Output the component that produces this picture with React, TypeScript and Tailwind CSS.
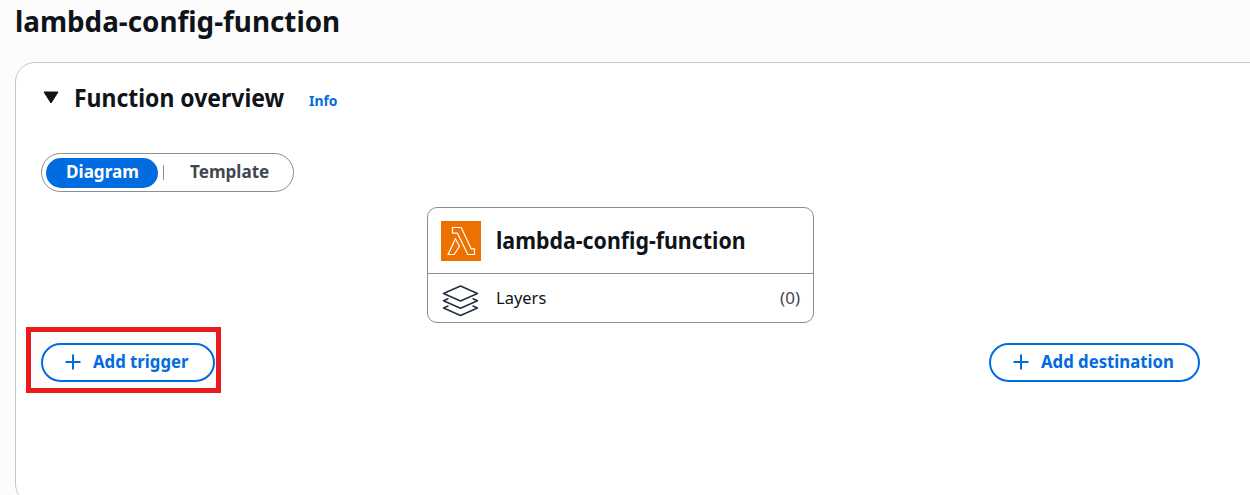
import React from "react";

function PlusIcon() {
  return (
    <svg width="16" height="16" viewBox="0 0 16 16" fill="none" stroke="currentColor" strokeWidth="2" className="-mt-[1px] shrink-0">
      <path d="M8 0.5V15.5M0.5 8H15.5" />
    </svg>
  );
}

function LambdaIcon() {
  return (
    <svg width="40" height="40" viewBox="0 0 40 40" className="shrink-0">
      <rect width="40" height="40" fill="#ed7100" />
      <g fill="none" stroke="#fff" strokeWidth="1.2" strokeLinejoin="miter">
        <path d="M11.5 6.5H20.2L30.2 27.8H33.5V33.5H26.8L16.4 12.2H11.5Z" />
        <path d="M14.4 17.8L18.5 25.2L13.2 33.5H7.1Z" />
      </g>
    </svg>
  );
}

function LayersIcon() {
  return (
    <svg width="38" height="34" viewBox="0 0 38 34" fill="none" stroke="#232f3e" strokeWidth="1.5" strokeLinejoin="round" strokeLinecap="round" className="mt-[6px] shrink-0">
      <path d="M18.5 2L35.5 9.5L18.5 17L1.5 9.5Z" />
      <path d="M6 14.8L1.5 16.8L18.5 24.3L35.5 16.8L31 14.8" />
      <path d="M6 22L1.5 24L18.5 31.5L35.5 24L31 22" />
    </svg>
  );
}

function ActionButton({ label, className }: { label: string; className: string }) {
  return (
    <button className={`flex h-[39px] shrink-0 items-center gap-[12px] rounded-full border-2 border-[#006ce0] bg-white pl-[22px] text-[18px] leading-none font-bold whitespace-nowrap text-[#006ce0] ${className}`}>
      <PlusIcon />
      <span className="-mt-[3px] origin-left scale-x-[0.93]">{label}</span>
    </button>
  );
}

export default function App() {
  return (
    <div className="h-[495px] w-full overflow-hidden bg-[#fcfcfd] pl-[15px] font-['Noto_Sans',sans-serif] text-[#0f141a]">
      <header className="flex h-[62px]">
        <h1 className="origin-left scale-x-[0.993] text-[28px] leading-[42px] font-bold whitespace-nowrap">lambda-config-function</h1>
      </header>
      <main className="h-[442px] w-[1260px] rounded-[20px] border border-[#c6c6cd] bg-white pl-[25px]">
        <div className="flex h-[90px] items-start pt-[17px]">
          <svg width="16" height="14" viewBox="0 0 16 14" className="mt-[11px] ml-[2px] shrink-0">
            <path d="M1 1H15L8 12Z" fill="#0f141a" stroke="#0f141a" strokeLinejoin="round" />
          </svg>
          <h2 className="ml-[15px] w-[235px] shrink-0 text-[25px] leading-[34px] font-bold whitespace-nowrap">
            <span className="inline-block origin-left scale-x-[0.918]">Function overview</span>
          </h2>
          <a className="mt-[10px] text-[14px] leading-[22px] font-bold text-[#006ce0]">
            <span className="inline-block origin-left scale-x-[0.99]">Info</span>
          </a>
        </div>
        <div className="flex h-[39px] w-[253px] items-center rounded-full border border-[#8c8c94] pl-[4px] text-[18px] leading-none font-bold whitespace-nowrap">
          <button className="h-[30px] w-[112px] shrink-0 rounded-full bg-[#006ce0] pb-[3px] pl-[20px] text-left text-white">
            <span className="inline-block origin-left scale-x-[0.95]">Diagram</span>
          </button>
          <div className="ml-[5px] h-[15px] w-px bg-[#8c8c94]" />
          <button className="ml-[26px] pb-[3px] text-[#424650]">
            <span className="inline-block origin-left scale-x-[0.95]">Template</span>
          </button>
        </div>
        <section className="mt-[15px] ml-[386px] h-[116px] w-[387px] rounded-[10px] border border-[#8c8c94]">
          <div className="flex h-[66px] items-center border-b border-[#8c8c94] pl-[13px]">
            <LambdaIcon />
            <h3 className="ml-[15px] text-[23px] leading-none font-bold whitespace-nowrap">
              <span className="inline-block origin-left scale-x-[0.928]">lambda-config-function</span>
            </h3>
          </div>
          <div className="flex h-[48px] items-center pr-[13px] pl-[14px] text-[17px]">
            <LayersIcon />
            <span className="ml-[16px] origin-left scale-x-[0.97]">Layers</span>
            <span className="ml-auto origin-right text-[#424650]">(0)</span>
          </div>
        </section>
        <div className="-ml-[15px] flex items-start pt-[4px]">
          <div className="h-[66px] w-[195px] shrink-0 border-[5px] border-[#e81c1c] bg-[#fcfcfd] pt-[11px] pl-[10px]">
            <ActionButton label="Add trigger" className="w-[174px]" />
          </div>
          <div className="ml-[768px] pt-[16px]">
            <ActionButton label="Add destination" className="w-[211px]" />
          </div>
        </div>
      </main>
    </div>
  );
}
